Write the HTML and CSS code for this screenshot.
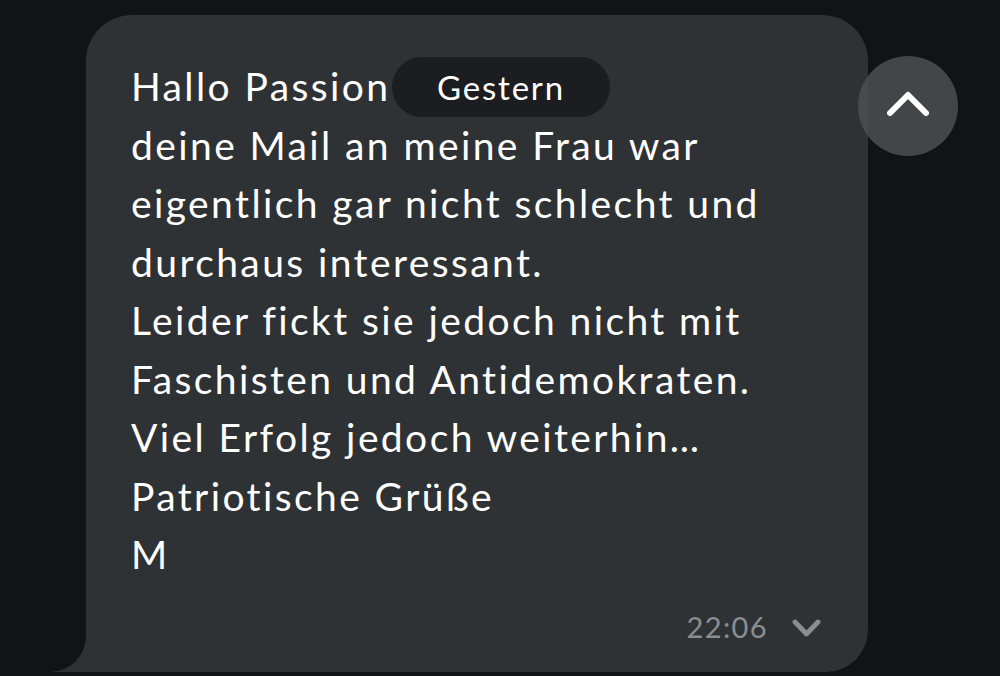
FILE: index.html
```html
<!DOCTYPE html>
<html lang="de">
<head>
<meta charset="utf-8">
<title>Nachricht</title>
<link rel="stylesheet" href="styles.css">
</head>
<body>
<div class="chat">
  <div class="bubble">
    <div class="date-chip">Gestern</div>
    <p class="message">Hallo Passion<br>deine Mail an meine Frau war<br>eigentlich gar nicht schlecht und<br>durchaus interessant.<br>Leider fickt sie jedoch nicht mit<br>Faschisten und Antidemokraten.<br>Viel Erfolg jedoch weiterhin…<br>Patriotische Grüße<br>M</p>
    <div class="meta">
      <span class="time">22:06</span>
      <svg class="down" width="30" height="20" viewBox="0 0 30 20"><path d="M3 4 L14.5 16 L26 4" fill="none" stroke="#8b8e91" stroke-width="4.8" stroke-linecap="round" stroke-linejoin="round"/></svg>
    </div>
  </div>
  <button class="scroll-btn" aria-label="Nach oben">
    <svg width="44" height="30" viewBox="0 0 44 30"><path d="M4 23 L22 5 L40 23" fill="none" stroke="#ffffff" stroke-width="6" stroke-linecap="round" stroke-linejoin="round"/></svg>
  </button>
</div>
</body>
</html>
```
FILE: styles.css
```css
html, body {
  margin: 0;
  padding: 0;
  background: #121315;
  height: 100%;
  overflow: hidden;
}
body {
  font-family: "Lato", "Open Sans", sans-serif;
  color: #ffffff;
}
.chat {
  display: flex;
  align-items: flex-start;
  padding: 15px 0 0 86px;
}
.bubble {
  position: relative;
  box-sizing: border-box;
  width: 782px;
  height: 657px;
  background: #2f3235;
  border-radius: 46px 46px 42px 0;
  padding: 42px 46px 28px 45px;
  display: flex;
  flex-direction: column;
}
.bubble::before {
  content: "";
  position: absolute;
  left: -86px;
  bottom: 0;
  width: 86px;
  height: 40px;
  background: #2f3235;
}
.bubble::after {
  content: "";
  position: absolute;
  left: -86px;
  bottom: 0;
  width: 86px;
  height: 40px;
  background: #121315;
  border-bottom-right-radius: 36px;
}
.message {
  margin: 0;
  font-size: 39px;
  line-height: 58.5px;
  letter-spacing: 2.4px;
}
.date-chip {
  position: absolute;
  left: 306px;
  top: 42px;
  width: 218px;
  height: 60px;
  border-radius: 30px;
  background: #1b1d20;
  color: #ffffff;
  font-size: 33px;
  line-height: 60px;
  letter-spacing: 1.8px;
  text-align: center;
}
.meta {
  margin-top: auto;
  display: flex;
  justify-content: flex-end;
  align-items: center;
  gap: 24px;
}
.time {
  font-size: 29px;
  line-height: 34px;
  letter-spacing: 1.4px;
  color: #8b8e91;
}
.down {
  display: block;
  margin-top: 2px;
}
.scroll-btn {
  margin: 41px 0 0 -10px;
  width: 100px;
  height: 100px;
  border-radius: 50%;
  border: none;
  padding: 0;
  background: rgba(78, 79, 81, 0.85);
  display: flex;
  align-items: center;
  justify-content: center;
  position: relative;
}
.scroll-btn svg {
  display: block;
  margin-top: -2px;
}
```
